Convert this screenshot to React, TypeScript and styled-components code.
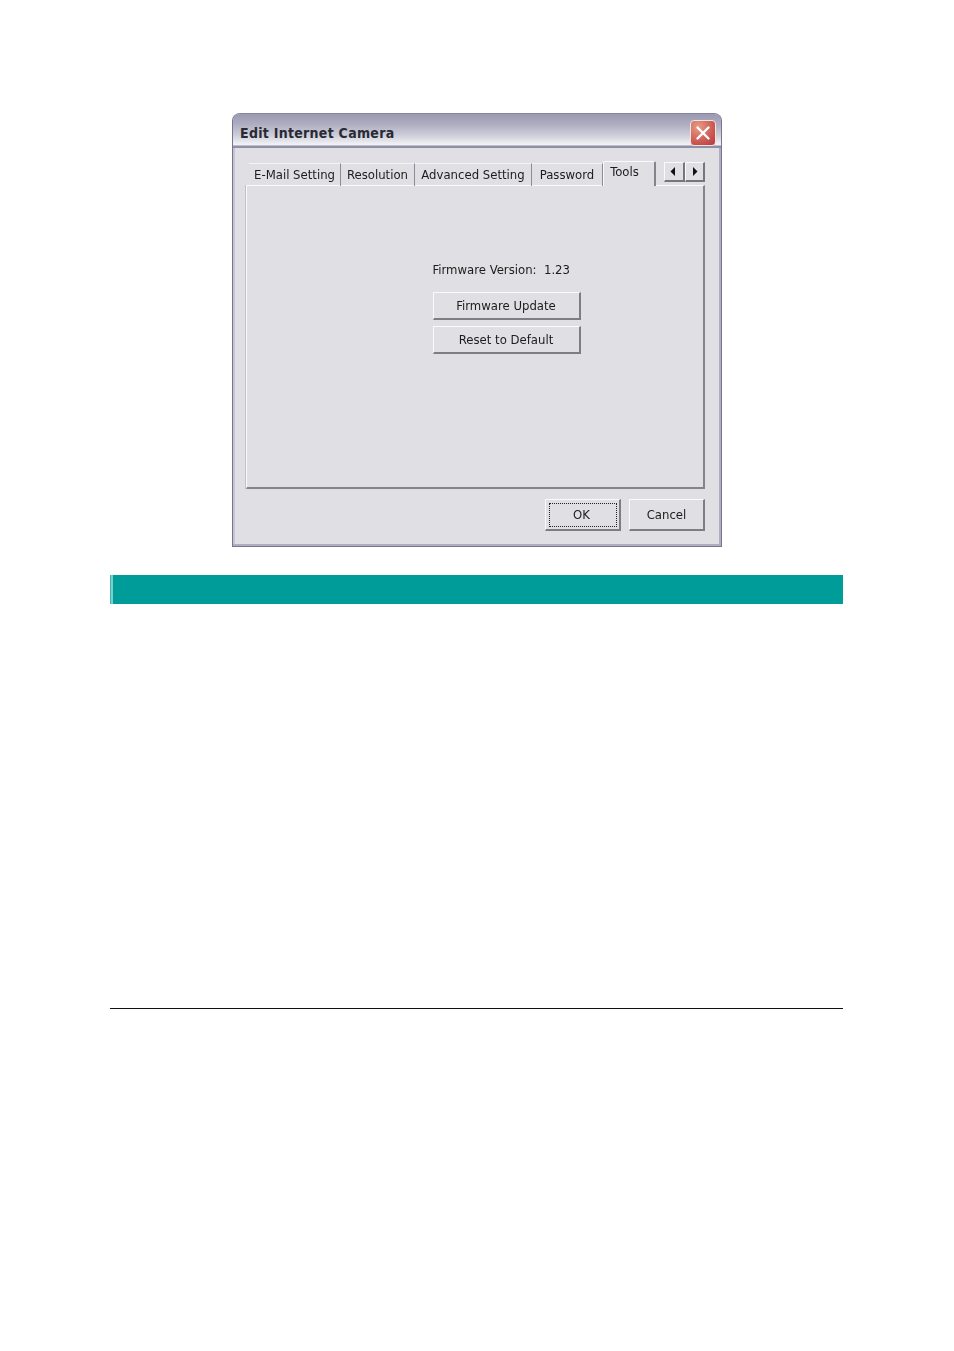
import React from "react";
import styled, { createGlobalStyle } from "styled-components";

const Global = createGlobalStyle`
  html, body { margin: 0; padding: 0; background: #fff; }
  #root { width: 954px; height: 1351px; }
  * { box-sizing: border-box; }
`;

const Page = styled.div`
  width: 954px;
  height: 1351px;
  padding-top: 113px;
  background: #fff;
  font-family: "DejaVu Sans Condensed", "DejaVu Sans", sans-serif;
  font-stretch: condensed;
  color: #1c1c1c;
`;

const WindowFrame = styled.div`
  width: 490px;
  height: 434px;
  margin-left: 232px;
  display: flex;
  flex-direction: column;
  background: #e0dfe3;
  border: 1px solid #77768e;
  border-top: 1px solid #85849c;
  border-radius: 8px 8px 0 0;
  box-shadow: inset -2px -2px 0 #aeaec0, inset 2px 0 0 #c4c4d2;
  filter: blur(0.3px);
`;

const TitleBar = styled.div`
  flex: none;
  height: 34px;
  display: flex;
  align-items: center;
  justify-content: space-between;
  padding: 3px 5px 0 7px;
  background: linear-gradient(#9a99b1 0%, #aeadc2 30%, #cdcdda 62%, #f2f2f6 90%, #8f8fa6 95%, #8f8fa6 100%);
  border-radius: 7px 7px 0 0;
`;

const Title = styled.span`
  font-size: 14px;
  font-weight: 700;
  letter-spacing: 0.28px;
  color: #2a2a32;
`;

const CloseButton = styled.div`
  width: 26px;
  height: 26px;
  display: flex;
  align-items: center;
  justify-content: center;
  border: 1px solid #f3e4e0;
  border-radius: 4px;
  background: radial-gradient(circle at 30% 25%, #e89c84, #cc5a54 60%, #b23a40);
`;

const Body = styled.div`
  flex: 1;
  display: flex;
  flex-direction: column;
  padding: 13px 16px 14px 13px;
`;

const TabRow = styled.div`
  flex: none;
  height: 25px;
  display: flex;
  align-items: flex-end;
  padding-left: 3px;
  margin-bottom: -1px;
  position: relative;
  z-index: 1;
`;

const Tab = styled.div<{ $w: number }>`
  width: ${(p) => p.$w}px;
  height: 23px;
  display: flex;
  align-items: center;
  justify-content: center;
  font-size: 13px;
  border-right: 1.5px solid #8d8c96;
  border-top: 1px solid #f4f4f6;
  padding-bottom: 2px;
  white-space: nowrap;
`;

const ActiveTab = styled.div`
  width: 53px;
  height: 25px;
  display: flex;
  justify-content: center;
  padding: 2px 9px 0 0;
  font-size: 13px;
  background: #e0dfe3;
  border-top: 1px solid #fafafa;
  border-left: 1px solid #fafafa;
  border-right: 2px solid #85848e;
  border-radius: 2px 2px 0 0;
`;

const Scroller = styled.div`
  display: flex;
  margin: 0 0 4px auto;
  align-self: flex-end;
`;

const ScrollButton = styled.div`
  width: 20.5px;
  height: 20px;
  display: flex;
  align-items: center;
  justify-content: center;
  background: #e0dfe3;
  border-top: 1px solid #fafafa;
  border-left: 1px solid #fafafa;
  border-right: 2px solid #77767f;
  border-bottom: 2px solid #77767f;
`;

const Panel = styled.div`
  flex: none;
  height: 304px;
  display: flex;
  flex-direction: column;
  align-items: center;
  padding: 75px 0 0 63px;
  border-top: 1px solid #fafafa;
  border-left: 1px solid #fafafa;
  border-right: 2px solid #85848e;
  border-bottom: 2px solid #85848e;
  box-shadow: -1px 0 0 #c0c0c8;
`;

const Version = styled.div`
  width: 148px;
  font-size: 13px;
  line-height: 18px;
  white-space: pre;
  margin-bottom: 13px;
`;

const ActionStack = styled.div`
  display: flex;
  flex-direction: column;
  gap: 6px;
`;

const ActionButton = styled.div`
  width: 148px;
  height: 28px;
  display: flex;
  align-items: center;
  justify-content: center;
  font-size: 13px;
  background: #e0dfe3;
  border-top: 1px solid #fafafa;
  border-left: 1px solid #fafafa;
  border-right: 2px solid #7e7d86;
  border-bottom: 2px solid #7e7d86;
`;

const Footer = styled.div`
  flex: none;
  display: flex;
  justify-content: flex-end;
  gap: 8px;
  margin-top: 10px;
`;

const DialogButton = styled.div`
  width: 76px;
  height: 32px;
  display: flex;
  align-items: center;
  justify-content: center;
  font-size: 13px;
  background: #e0dfe3;
  border-top: 1px solid #fafafa;
  border-left: 1px solid #fafafa;
  border-right: 2px solid #7e7d86;
  border-bottom: 2px solid #7e7d86;
`;

const FocusRing = styled.div`
  width: 68px;
  height: 24px;
  display: flex;
  align-items: center;
  justify-content: center;
  padding-right: 2px;
  border: 1px dotted #222;
`;

const SectionBar = styled.div`
  width: 733px;
  height: 29px;
  margin: 28px 0 0 110px;
  background: #009c9a;
  border-left: 1px solid #3fb5b3;
  box-shadow: inset 2px 0 0 #7fcecc;
`;

const Rule = styled.div`
  width: 733px;
  height: 1px;
  margin: 404px 0 0 110px;
  background: #111;
`;

const tabs: [string, number][] = [
  ["E-Mail Setting", 92],
  ["Resolution", 74],
  ["Advanced Setting", 117],
  ["Password", 71],
];

export default function App() {
  return (
    <Page>
      <Global />
      <WindowFrame>
        <TitleBar>
          <Title>Edit Internet Camera</Title>
          <CloseButton>
            <svg width="16" height="16" viewBox="0 0 16 16">
              <path d="M2.5 2.5 L13.5 13.5 M13.5 2.5 L2.5 13.5" stroke="#fff" strokeWidth="2.4" strokeLinecap="round" />
            </svg>
          </CloseButton>
        </TitleBar>
        <Body>
          <TabRow>
            {tabs.map(([label, w]) => (
              <Tab key={label} $w={w}>{label}</Tab>
            ))}
            <ActiveTab>Tools</ActiveTab>
            <Scroller>
              <ScrollButton>
                <svg width="8" height="9" viewBox="0 0 8 9"><path d="M5 0 V9 L0.5 4.5 Z" fill="#111" /></svg>
              </ScrollButton>
              <ScrollButton>
                <svg width="8" height="9" viewBox="0 0 8 9"><path d="M3 0 V9 L7.5 4.5 Z" fill="#111" /></svg>
              </ScrollButton>
            </Scroller>
          </TabRow>
          <Panel>
            <Version>{"Firmware Version:  1.23"}</Version>
            <ActionStack>
              <ActionButton>Firmware Update</ActionButton>
              <ActionButton>Reset to Default</ActionButton>
            </ActionStack>
          </Panel>
          <Footer>
            <DialogButton><FocusRing>OK</FocusRing></DialogButton>
            <DialogButton>Cancel</DialogButton>
          </Footer>
        </Body>
      </WindowFrame>
      <SectionBar />
      <Rule />
    </Page>
  );
}
